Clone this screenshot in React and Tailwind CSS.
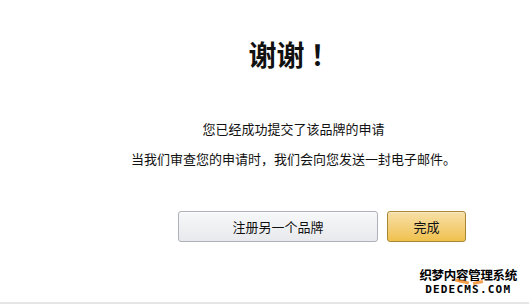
export default function App() {
  const font = { fontFamily: '"Noto Sans CJK SC", "Noto Sans", sans-serif' };
  return (
    <div
      className="relative w-[529px] h-[304px] bg-white border-b-2 border-[#e6e6e6] text-[#111]"
      style={font}
    >
      <div className="flex flex-col pl-[58px]">
        <h1 className="mt-[36px] text-center text-[28px] leading-[36px] font-bold">
          谢谢<span className="ml-[6px]">！</span>
        </h1>
        <p className="mt-[47px] text-center text-[13px] leading-[20px]">您已经成功提交了该品牌的申请</p>
        <p className="mt-[10px] text-center text-[13px] leading-[20px]">
          当我们审查您的申请时，我们会向您发送一封电子邮件。
        </p>
      </div>
      <div className="flex gap-[9px] pl-[178px] mt-[42px]">
        <button className="w-[200px] h-[31px] rounded-[3px] border border-[#adb1b8] bg-gradient-to-b from-[#f7f8fa] to-[#e7e9ec] text-[13px] text-[#111] shadow-[inset_0_1px_0_rgba(255,255,255,0.6)]">
          注册另一个品牌
        </button>
        <button className="w-[79px] h-[31px] rounded-[3px] border border-[#a88734] bg-gradient-to-b from-[#f7dfa5] to-[#f0c14b] text-[13px] text-[#111] shadow-[inset_0_1px_0_rgba(255,255,255,0.4)]">
          完成
        </button>
      </div>
      <div className="absolute right-[12px] bottom-[7px] flex flex-col items-center leading-none">
        <span
          className="text-[12.5px] font-bold text-black tracking-[-0.3px]"
          style={{ textShadow: '1px 1px 0 #fff, -1px -1px 0 #fff, 1px -1px 0 #fff, -1px 1px 0 #fff' }}
        >
          织梦内容管理系统
        </span>
        <span className="relative mt-[3px] text-[11px] font-bold text-black tracking-[1.2px]" style={{ fontFamily: '"DejaVu Sans Mono", monospace' }}>
          DEDECMS.COM
          <span className="absolute left-[30px] -top-[4px] w-[14px] h-[3px] bg-[#f08a24] rotate-12 opacity-80"></span>
          <span className="absolute left-[48px] -top-[3px] w-[10px] h-[3px] bg-[#f08a24] -rotate-12 opacity-80"></span>
        </span>
      </div>
    </div>
  );
}
